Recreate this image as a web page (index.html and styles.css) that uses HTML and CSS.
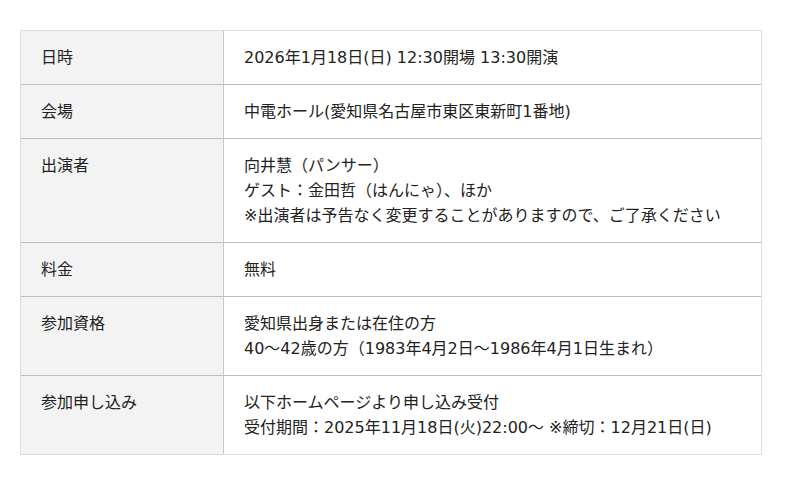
FILE: index.html
```html
<!DOCTYPE html>
<html lang="ja">
<head>
<meta charset="utf-8">
<title>イベント概要</title>
<link rel="stylesheet" href="styles.css">
</head>
<body>
<main class="page">
  <table class="info">
    <tbody>
      <tr>
        <th>日時</th>
        <td>2026年1月18日(日) 12:30開場 13:30開演</td>
      </tr>
      <tr>
        <th>会場</th>
        <td>中電ホール(愛知県名古屋市東区東新町1番地)</td>
      </tr>
      <tr>
        <th>出演者</th>
        <td>向井慧（パンサー）<br>ゲスト：金田哲（はんにゃ）、ほか<br>※出演者は予告なく変更することがありますので、ご了承ください</td>
      </tr>
      <tr>
        <th>料金</th>
        <td>無料</td>
      </tr>
      <tr>
        <th>参加資格</th>
        <td>愛知県出身または在住の方<br>40〜42歳の方（1983年4月2日〜1986年4月1日生まれ）</td>
      </tr>
      <tr>
        <th>参加申し込み</th>
        <td>以下ホームページより申し込み受付<br>受付期間：2025年11月18日(火)22:00〜 ※締切：12月21日(日)</td>
      </tr>
    </tbody>
  </table>
</main>
</body>
</html>
```
FILE: styles.css
```css
html, body {
  margin: 0;
  padding: 0;
  background: #ffffff;
}

body {
  font-family: "DejaVu Sans", "Noto Sans CJK JP", sans-serif;
  font-size: 16px;
  line-height: 25px;
  color: #222222;
}

.page {
  padding: 30px 20px;
}

.info {
  width: 742px;
  border-collapse: separate;
  border-spacing: 0;
  border: 1px solid #dddddd;
}

.info th,
.info td {
  padding: 14px 20px;
  text-align: left;
  vertical-align: top;
  font-weight: normal;
}

.info tr + tr th,
.info tr + tr td {
  border-top: 1px solid #bdbdbd;
}

.info th {
  width: 162px;
  background: #f3f3f3;
  border-right: 1px solid #c8c8c8;
}
```
